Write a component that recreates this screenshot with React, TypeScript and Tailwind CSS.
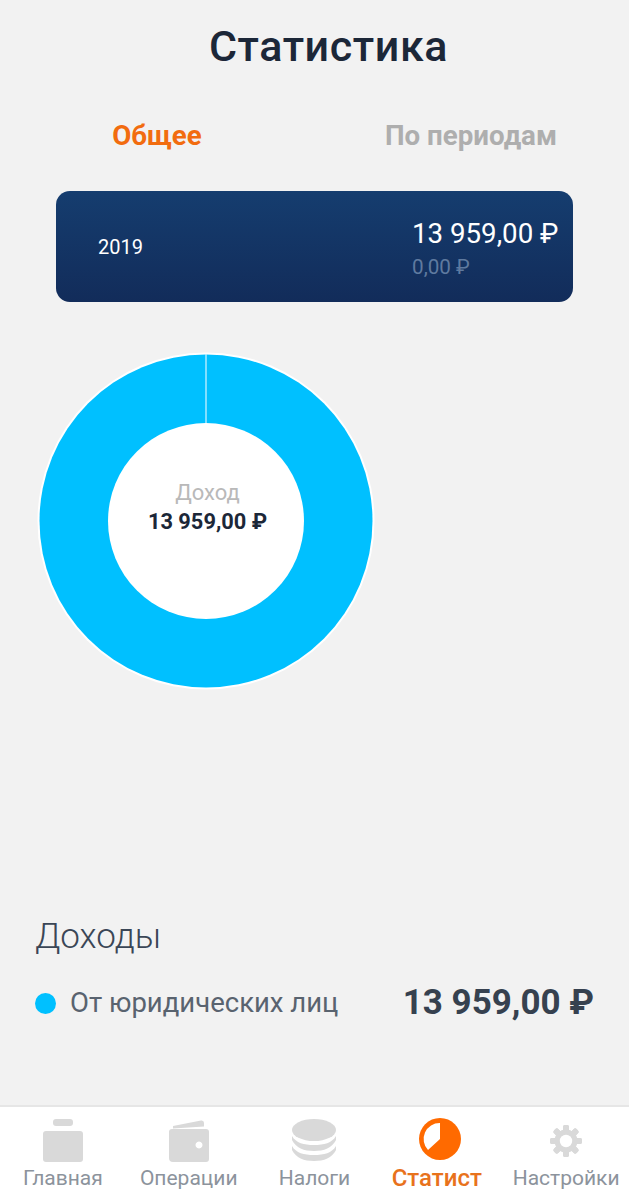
export default function App() {
  const tabs = [
    { label: 'Главная', icon: <CaseIcon />, active: false },
    { label: 'Операции', icon: <WalletIcon />, active: false },
    { label: 'Налоги', icon: <CoinsIcon />, active: false },
    { label: 'Статист', icon: <PieIcon />, active: true },
    { label: 'Настройки', icon: <GearIcon />, active: false },
  ];

  return (
    <div className="flex h-[1200px] w-[629px] flex-col overflow-hidden bg-[#f2f2f2] font-['Roboto',sans-serif]">
      <h1 className="mt-[20px] pl-[28px] text-center text-[43px] leading-[52px] font-medium tracking-[0.6px] text-[#1c2738]">
        Статистика
      </h1>

      <div className="mt-[48px] flex text-[27.7px] leading-[32px] font-bold">
        <div className="w-[314px] text-center text-[#f26c0f]">Общее</div>
        <div className="w-[314px] text-center text-[#aeaeae]">По периодам</div>
      </div>

      <div className="mt-[39px] ml-[56px] flex h-[111px] w-[517px] items-center justify-between rounded-[14px] bg-gradient-to-b from-[#153d6f] to-[#122c5a] pr-[14px] pl-[42px]">
        <span className="text-[20px] text-white">2019</span>
        <div className="w-[147px] pt-[4px]">
          <div className="text-[27.7px] leading-[32px] whitespace-nowrap text-white">13 959,00 ₽</div>
          <div className="mt-[4px] text-[20.7px] leading-[26px] text-[#5f7a9f]">0,00 ₽</div>
        </div>
      </div>

      <div className="relative mt-[50px] ml-[37px] h-[338px] w-[338px]">
        <svg viewBox="0 0 338 338" className="h-full w-full">
          <circle cx="169" cy="169" r="168.5" fill="#ffffff" />
          <circle cx="169" cy="169" r="166.5" fill="#00c0ff" />
          <line x1="169" y1="2" x2="169" y2="72" stroke="#d8f4ff" strokeWidth="1.2" />
          <circle cx="169" cy="169" r="98" fill="#ffffff" />
        </svg>
        <div className="absolute inset-x-0 top-[126px] pl-[3px] text-center">
          <div className="text-[22px] leading-[29px] text-[#b9b9b9]">Доход</div>
          <div className="text-[21.8px] leading-[29px] font-bold text-[#1c2738]">13 959,00 ₽</div>
        </div>
      </div>

      <div className="mt-[225px] pl-[35px] text-[35px] leading-[44px] font-light text-[#3a4656]">Доходы</div>

      <div className="mt-[24px] flex items-center pr-[35px] pl-[35px]">
        <span className="h-[21px] w-[21px] rounded-full bg-[#00c0ff]" />
        <span className="ml-[14px] text-[27.5px] leading-[34px] text-[#59636f]">От юридических лиц</span>
        <span className="ml-auto text-[35px] leading-[40px] font-bold text-[#36414f]">13 959,00 ₽</span>
      </div>

      <nav className="mt-auto flex h-[95px] border-t-2 border-[#e6e6e6] bg-white">
        {tabs.map((tab) => (
          <div key={tab.label} className="flex flex-1 flex-col items-center pt-[11px]">
            <div className="flex h-[46px] items-center justify-center">{tab.icon}</div>
            <span
              className={
                tab.active
                  ? 'mt-[1px] pr-[7px] text-[24px] leading-[26px] font-medium whitespace-nowrap text-[#e8721c]'
                  : 'mt-[1px] text-[21px] leading-[26px] whitespace-nowrap text-[#8c939c]'
              }
            >
              {tab.label}
            </span>
          </div>
        ))}
      </nav>
    </div>
  );
}

function CaseIcon() {
  return (
    <svg width="42" height="44" viewBox="0 0 42 44" fill="#d9d9d9">
      <rect x="11" y="0" width="20" height="7" rx="3" />
      <rect x="1" y="12" width="40" height="31" rx="3" />
    </svg>
  );
}

function WalletIcon() {
  return (
    <svg width="42" height="44" viewBox="0 0 42 44" fill="#d9d9d9">
      <path d="M5 7 L33 1.5 Q36 1 36 4 V7.5 L5 9.5 Z" />
      <path
        fillRule="evenodd"
        d="M1 13 Q1 10 4 10 H38 Q41 10 41 13 V40 Q41 43 38 43 H5 Q1 43 1 39 Z M31 22.5 a3.5 3.5 0 1 0 0.01 0 Z"
      />
    </svg>
  );
}

function CoinsIcon() {
  return (
    <svg width="44" height="44" viewBox="0 0 44 44" fill="#d9d9d9">
      <ellipse cx="22" cy="11" rx="22" ry="11" />
      <path d="M0 17 C4 24 12 26 22 26 C32 26 40 24 44 17 V21 C40 29 32 32 22 32 C12 32 4 29 0 21 Z" />
      <path d="M0 27 C4 34 12 36 22 36 C32 36 40 34 44 27 V31 C40 39 32 42 22 42 C12 42 4 39 0 31 Z" />
    </svg>
  );
}

function PieIcon() {
  return (
    <svg width="42" height="42" viewBox="0 0 42 42" className="mb-[5px]">
      <circle cx="21" cy="21" r="21" fill="#ff6a00" />
      <path d="M21 21 V5 A16 16 0 0 0 9 32 Z" fill="#ffffff" />
    </svg>
  );
}

function GearIcon() {
  const teeth = [0, 45, 90, 135, 180, 225, 270, 315];
  return (
    <svg width="32" height="32" viewBox="0 0 32 32">
      {teeth.map((deg) => (
        <rect key={deg} x="13" y="0" width="6" height="32" rx="2" fill="#d9d9d9" transform={`rotate(${deg} 16 16)`} />
      ))}
      <circle cx="16" cy="16" r="11.5" fill="#d9d9d9" />
      <circle cx="16" cy="16" r="6.2" fill="#ffffff" />
    </svg>
  );
}
